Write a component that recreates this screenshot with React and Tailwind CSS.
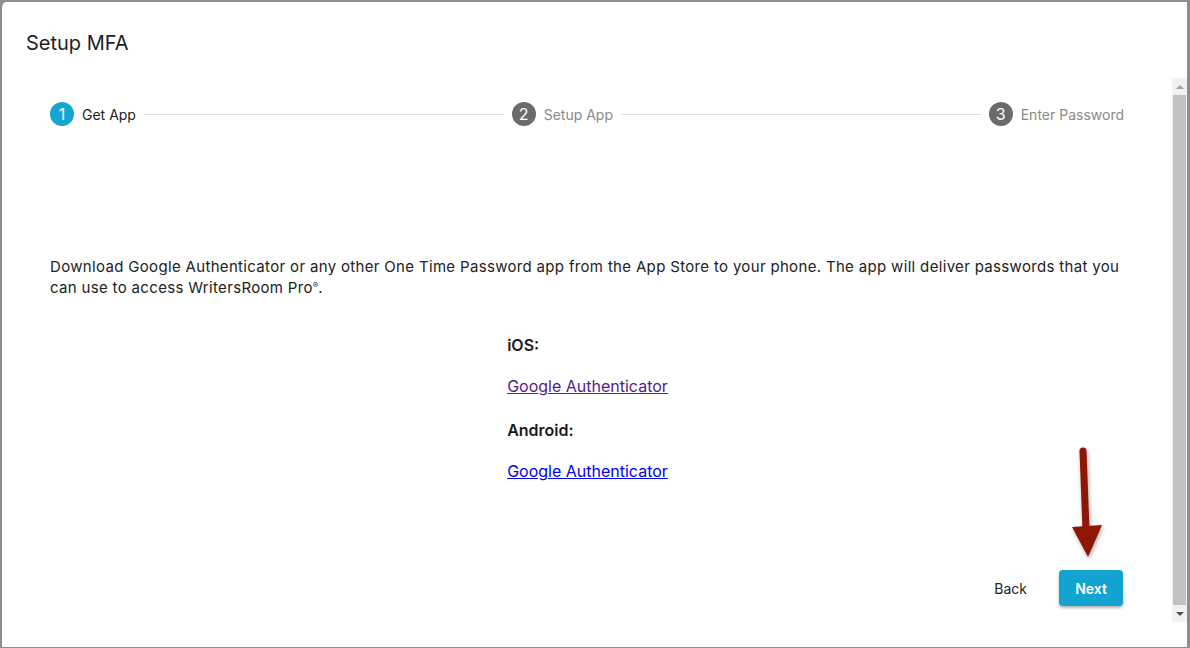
import React from "react";

function Step({ n, label, active }) {
  return (
    <div className="flex items-center gap-[8px] shrink-0">
      <div
        className={
          "w-[24px] h-[24px] rounded-full flex items-center justify-center text-white text-[16px] " +
          (active ? "bg-[#16a5d3]" : "bg-[#6b6b6b]")
        }
      >
        {n}
      </div>
      <span className={"text-[14px] " + (active ? "text-[#222]" : "text-[#8a8a8a]")}>{label}</span>
    </div>
  );
}

export default function App() {
  return (
    <div
      className="w-[1190px] h-[648px] bg-[#8d8d8d] overflow-hidden"
      style={{ fontFamily: "Inter, 'Noto Sans', sans-serif" }}
    >
      <div className="w-[1187px] h-[645px] mt-[2px] border-l-[2px] border-[#8d8d8d] bg-white rounded-tl-[6px] flex flex-col">
        <div className="h-[76px] pl-[24px] pt-[28px]">
          <h1 className="text-[20px] leading-[26px] text-[#1e1e1e]">Setup MFA</h1>
        </div>
        <div className="flex h-[544px]">
          <div className="flex-1 relative flex flex-col pl-[48px] pr-[48px]">
            <div className="flex items-center mt-[24px] h-[24px]">
              <Step n="1" label="Get App" active />
              <div className="flex-1 h-px bg-[#dcdcdc] mx-[8px]" />
              <Step n="2" label="Setup App" />
              <div className="flex-1 h-px bg-[#dcdcdc] mx-[8px]" />
              <Step n="3" label="Enter Password" />
            </div>
            <p className="mt-[130px] text-[15px] leading-[21px] text-[#222] tracking-[0.33px]">
              Download Google Authenticator or any other One Time Password app from the App Store to your phone. The app will deliver passwords that you can use to access WritersRoom Pro<span className="text-[8px] leading-[0] align-[5px] tracking-normal">®</span>.
            </p>
            <div className="self-center w-fit whitespace-nowrap mt-[36px] text-[16px] text-[#1a1a1a] ml-[1px]">
              <div className="font-semibold leading-[22px]">iOS:</div>
              <a href="#" className="block mt-[19px] leading-[22px] text-[#551a8b] underline">Google Authenticator</a>
              <div className="font-semibold mt-[22px] leading-[22px]">Android:</div>
              <a href="#" className="block mt-[19px] leading-[22px] text-[#0000ee] underline">Google Authenticator</a>
            </div>
            <div className="flex justify-end items-center mt-[88px] gap-[32px] mr-[1px]">
              <button className="text-[14px] text-[#222]">Back</button>
              <button className="w-[64px] h-[36px] rounded-[4px] bg-[#13a3d0] text-white text-[14px] font-semibold shadow-[0_2px_3px_rgba(0,0,0,0.3)]">
                Next
              </button>
            </div>
            <svg
              className="absolute left-[1058px] top-[362px]"
              width="50"
              height="124"
              viewBox="0 0 50 124"
              style={{ filter: "drop-shadow(1px 2px 2px rgba(0,0,0,0.35))" }}
            >
              <path d="M23 11 L26 90" stroke="#8e1606" strokeWidth="7" strokeLinecap="round" fill="none" />
              <path d="M12 87 L42 85 L28 117 Z" fill="#8e1606" />
            </svg>
          </div>
          <div className="w-[15px] bg-[#f1f1f1] flex flex-col items-center">
            <div className="h-[17px] w-full flex items-center justify-center">
              <div className="w-0 h-0 border-l-[4px] border-r-[4px] border-b-[4px] border-l-transparent border-r-transparent border-b-[#a3a3a3]" />
            </div>
            <div className="w-[13px] flex-1 bg-[#c1c1c1]" />
            <div className="h-[17px] w-full flex items-center justify-center">
              <div className="w-0 h-0 border-l-[4px] border-r-[4px] border-t-[4px] border-l-transparent border-r-transparent border-t-[#505050]" />
            </div>
          </div>
        </div>
      </div>
    </div>
  );
}
